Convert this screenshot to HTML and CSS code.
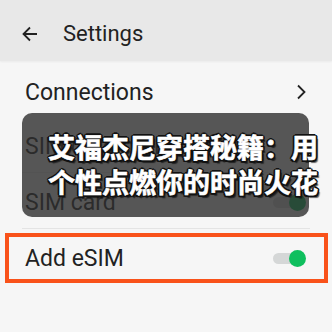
FILE: index.html
```html
<!DOCTYPE html>
<html lang="en">
<head>
<meta charset="utf-8">
<link rel="stylesheet" href="styles.css">
</head>
<body>
<div class="screen">
  <header class="appbar">
    <svg class="back" width="16" height="16" viewBox="0 0 16 16"><path d="M15 8H2M8 1.5L1.5 8 8 14.5" fill="none" stroke="#222" stroke-width="1.8"/></svg>
    <span class="title">Settings</span>
  </header>
  <main class="list">
    <div class="row first">
      <span class="label">Connections</span>
      <svg class="chev" width="11" height="16" viewBox="0 0 11 16"><path d="M2 1.5L8.5 8 2 14.5" fill="none" stroke="#222" stroke-width="1.8"/></svg>
    </div>
    <div class="row">
      <span class="label">SIM card manager</span>
    </div>
    <div class="divider"></div>
    <div class="row">
      <span class="label">SIM card</span>
      <span class="toggle"></span>
    </div>
    <div class="divider"></div>
    <div class="row highlighted">
      <span class="label">Add eSIM</span>
      <span class="toggle"></span>
      <span class="highlight"></span>
    </div>
  </main>
  <div class="caption-box"></div>
  <div class="caption">艾福杰尼穿搭秘籍：用<br>个性点燃你的时尚火花</div>
</div>
</body>
</html>
```

FILE: styles.css
```css
html, body {
  margin: 0;
  padding: 0;
  background: #f6f6f6;
}
.screen {
  position: relative;
  width: 332px;
  height: 332px;
  overflow: hidden;
  font-family: Roboto, "Noto Sans", sans-serif;
  color: #222;
}
.appbar {
  height: 61px;
  box-sizing: border-box;
  padding: 6px 0 0 22px;
  display: flex;
  align-items: center;
  gap: 25px;
  background: #e8e8e8;
  box-shadow: 0 1px 2px rgba(0,0,0,0.05);
}
.back { display: block; }
.title {
  font-size: 22px;
}
.list {
  display: flex;
  flex-direction: column;
}
.row {
  position: relative;
  height: 56px;
  box-sizing: border-box;
  padding: 3px 26px 0 25px;
  display: flex;
  align-items: center;
  justify-content: space-between;
  font-size: 23px;
}
.row.first {
  padding-top: 6px;
}
.divider {
  height: 1px;
  margin: -1px 22px 0 22px;
  background: #e4e4e4;
}
.chev { display: block; margin-right: -1px; }
.toggle {
  position: relative;
  width: 33px;
  height: 17px;
}
.toggle::before {
  content: "";
  position: absolute;
  left: 0;
  top: 3px;
  width: 28px;
  height: 11px;
  border-radius: 6px;
  background: #d5d7d7;
}
.toggle::after {
  content: "";
  position: absolute;
  right: 0;
  top: 0;
  width: 17px;
  height: 17px;
  border-radius: 50%;
  background: #0fbf5e;
}
.highlight {
  position: absolute;
  left: 5px;
  right: 4px;
  top: 4px;
  bottom: 2px;
  border: 4px solid #f9521a;
}
.caption-box {
  position: absolute;
  left: 22px;
  top: 113px;
  width: 287px;
  height: 104px;
  border-radius: 10px;
  background: rgba(46,46,46,0.8);
}
.caption {
  position: absolute;
  left: 48px;
  top: 129px;
  white-space: nowrap;
  font-family: "Noto Sans CJK SC", sans-serif;
  font-weight: 700;
  font-size: 27px;
  line-height: 35px;
  color: #fff;
  -webkit-text-stroke: 0.6px #fff;
  text-shadow: -1.5px -1.5px 0 #111, 1.5px -1.5px 0 #111, -1.5px 1.5px 0 #111, 1.5px 1.5px 0 #111, 0 -2px 0 #111, 0 2px 0 #111, -2px 0 0 #111, 2px 0 0 #111, 2.5px 2.5px 1px rgba(0,0,0,0.6);
}
```
